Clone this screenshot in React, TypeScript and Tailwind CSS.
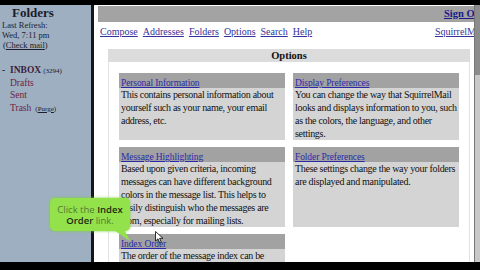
import React from 'react'

const serif = { fontFamily: '"Liberation Serif", "Times New Roman", serif' }

type Card = { title: string; body: string }

const rows: Card[][] = [
  [
    {
      title: 'Personal Information',
      body: 'This contains personal information about yourself such as your name, your email address, etc.',
    },
    {
      title: 'Display Preferences',
      body: 'You can change the way that SquirrelMail looks and displays information to you, such as the colors, the language, and other settings.',
    },
  ],
  [
    {
      title: 'Message Highlighting',
      body: 'Based upon given criteria, incoming messages can have different background colors in the message list. This helps to easily distinguish who the messages are from, especially for mailing lists.',
    },
    {
      title: 'Folder Preferences',
      body: 'These settings change the way your folders are displayed and manipulated.',
    },
  ],
]

function OptionCard({ card }: { card: Card }) {
  return (
    <div className="flex flex-col">
      <div className="h-[15px] bg-[#a2a2a2] px-[2px] leading-[15px]">
        <a className="text-[9.5px] tracking-[-0.1px] text-[#2a2aa8] underline">{card.title}</a>
      </div>
      <div className="flex-1 bg-[#d4d4d4] px-[2px] text-[10px] leading-[13px] tracking-[-0.3px] text-[#111]">
        {card.body}
      </div>
    </div>
  )
}

export default function App() {
  return (
    <div className="relative flex h-[270px] w-[480px] flex-col overflow-hidden bg-black" style={serif}>
      <div className="h-[5px]" />

      <div className="flex h-[257px]">
        {/* Folder list */}
        <div className="w-[91px] bg-[#9eafc1] pt-[1px] text-[#1c1c2c]">
          <div className="pl-[12px] text-[13px] font-bold leading-[14px]">Folders</div>
          <div className="pl-[2px] text-[8.5px] leading-[10px]">
            <div>Last Refresh:</div>
            <div>Wed, 7:11 pm</div>
            <div className="pl-[1px]">
              (<a className="underline">Check mail</a>)
            </div>
          </div>
          <div className="mt-[14px] pl-[2px] text-[9.5px] leading-[12.5px]">
            <div className="flex h-[12.5px] items-baseline">
              <span className="w-[8px]">-</span>
              <span className="font-bold text-[#3b1d3c]">INBOX</span>
              <span className="ml-[2px] text-[7px]">(3294)</span>
            </div>
            <div className="h-[12.5px] pl-[8px] text-[#6e2340]">Drafts</div>
            <div className="h-[12.5px] pl-[8px] text-[#6e2340]">Sent</div>
            <div className="flex h-[12.5px] items-baseline pl-[8px]">
              <span className="text-[#6e2340]">Trash</span>
              <span className="ml-[4px] text-[7px]">(<a className="underline">Purge</a>)</span>
            </div>
          </div>
        </div>

        <div className="w-[3px] bg-[#151515]" />

        {/* Main */}
        <div className="flex-1 overflow-hidden bg-white pl-[4px]">
          <div className="w-[388px]">
            <div className="mt-[1px] flex h-[16px] items-center justify-end bg-[#a3a3a3] pr-[2px]">
              <a className="text-[10.5px] font-bold text-[#1a1a8a] underline">Sign Out</a>
            </div>
            <div className="flex h-[18px] items-center pl-[2px] text-[10px] text-[#333399]">
              <div className="flex gap-[5px]">
                <a className="underline">Compose</a>
                <a className="underline">Addresses</a>
                <a className="underline">Folders</a>
                <a className="underline">Options</a>
                <a className="underline">Search</a>
                <a className="underline">Help</a>
              </div>
              <a className="ml-auto underline">SquirrelMail</a>
            </div>

            <div className="ml-[10px] mt-[9px] w-[362px]">
              <div className="h-[13px] bg-[#dcdcdc] text-center text-[10.5px] font-bold leading-[13px] text-[#111]">
                Options
              </div>
              <div className="border-x border-[#e2e2e2] px-[10px] pt-[11px]">
                <div className="flex flex-col gap-[7px]">
                  {rows.map((row, i) => (
                    <div key={i} className="grid grid-cols-2 gap-[8px]">
                      {row.map((card) => (
                        <OptionCard key={card.title} card={card} />
                      ))}
                    </div>
                  ))}
                  <div className="grid grid-cols-2 gap-[8px]">
                    <OptionCard
                      card={{
                        title: 'Index Order',
                        body: 'The order of the message index can be rearranged to contain different columns.',
                      }}
                    />
                    <div />
                  </div>
                </div>
              </div>
            </div>
          </div>
        </div>

        {/* Window edge */}
        <div className="flex w-[6px] flex-col border-l border-[#777]">
          <div className="h-[70px] bg-[#8c8c8c]" />
          <div className="flex-1 bg-[#c8c8c8]" />
        </div>
      </div>

      <div className="flex-1 bg-black" />

      {/* Tutorial callout */}
      <div
        className="absolute left-[50px] top-[198px] flex h-[33px] w-[80px] flex-col items-center justify-center rounded-[5px] bg-[#93e24c] text-[9.5px] leading-[11px] text-[#557a33] shadow-[0_0_3px_#7ccf36]"
        style={{ fontFamily: '"Open Sans", "Liberation Sans", sans-serif' }}
      >
        <div className="whitespace-nowrap">
          Click the <span className="font-semibold text-[#1d2a10]">Index</span>
        </div>
        <div className="whitespace-nowrap">
          <span className="font-semibold text-[#1d2a10]">Order</span> link.
        </div>
      </div>
      <svg className="absolute left-[112px] top-[229px]" width="20" height="14" viewBox="0 0 20 14">
        <path d="M0 0 L12 0 L18 12 Z" fill="#93e24c" />
      </svg>

      {/* Mouse pointer */}
      <svg className="absolute left-[155px] top-[231px]" width="9" height="13" viewBox="0 0 9 13">
        <path d="M0.5 0.5 L0.5 10 L3 7.8 L4.8 12 L6.3 11.3 L4.6 7.3 L8 7.3 Z" fill="#fff" stroke="#000" strokeWidth="0.8" />
      </svg>
    </div>
  )
}
